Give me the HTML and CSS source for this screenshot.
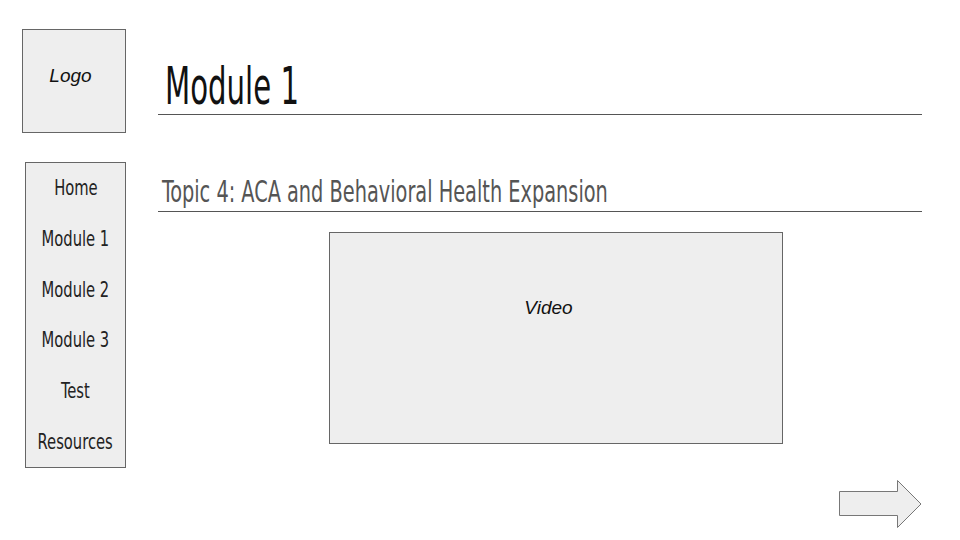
FILE: index.html
```html
<!DOCTYPE html>
<html>
<head>
<meta charset="utf-8">
<link rel="stylesheet" href="styles.css">
</head>
<body>
<div class="page">
  <div class="logo"><span>Logo</span></div>
  <header class="header"><h1 class="title"><span class="sq">Module 1</span></h1></header>
  <nav class="nav">
    <a class="nav-item"><span class="sq">Home</span></a>
    <a class="nav-item"><span class="sq">Module 1</span></a>
    <a class="nav-item"><span class="sq">Module 2</span></a>
    <a class="nav-item"><span class="sq">Module 3</span></a>
    <a class="nav-item"><span class="sq">Test</span></a>
    <a class="nav-item"><span class="sq">Resources</span></a>
  </nav>
  <main class="main">
    <h2 class="topic"><span class="sq">Topic 4: ACA and Behavioral Health Expansion</span></h2>
    <div class="video"><span>Video</span></div>
  </main>
  <div class="footer">
    <svg class="next" width="84" height="49" viewBox="0 0 84 49">
      <polygon points="1.5,11.5 59.5,11.5 59.5,0.5 83,24 59.5,47.5 59.5,35.5 1.5,35.5" fill="#eeeeee" stroke="#777" stroke-width="1"/>
    </svg>
  </div>
</div>
</body>
</html>
```

FILE: styles.css
```css
html, body {
  margin: 0;
  padding: 0;
  background: #ffffff;
}

.page {
  display: grid;
  grid-template-columns: 104px 764px;
  column-gap: 32px;
  padding: 29px 0 0 22px;
  font-family: "Liberation Sans Narrow", "DejaVu Sans Condensed", "Liberation Sans", sans-serif;
}

.sq {
  display: inline-block;
  transform: scaleX(0.78);
  transform-origin: left center;
  white-space: nowrap;
}

.logo {
  box-sizing: border-box;
  width: 104px;
  height: 104px;
  border: 1px solid #666;
  background: #eeeeee;
  display: flex;
  align-items: center;
  justify-content: center;
  font-family: "Liberation Sans", Arial, sans-serif;
  font-style: italic;
  font-size: 19px;
  color: #111;
}

.logo span {
  margin: 0 7px 10px 0;
}

.header {
  box-sizing: border-box;
  height: 86px;
  border-bottom: 1px solid #555;
  display: flex;
  align-items: flex-end;
}

.title {
  margin: 0 0 0 7px;
  font-weight: normal;
  font-size: 52px;
  line-height: 1;
  color: #111;
  padding-bottom: 2px;
}

.title .sq {
  transform: scaleX(0.624);
}

.nav {
  box-sizing: border-box;
  margin: 29px 0 0 3px;
  width: 101px;
  height: 306px;
  border: 1px solid #666;
  background: #eeeeee;
  display: flex;
  flex-direction: column;
}

.nav-item {
  flex: 1;
  display: flex;
  align-items: center;
  justify-content: center;
  font-size: 21px;
  color: #222;
}

.nav-item .sq {
  transform-origin: center center;
}

.main {
  margin-top: 29px;
}

.topic {
  box-sizing: border-box;
  margin: 0;
  height: 50px;
  border-bottom: 1px solid #555;
  display: flex;
  align-items: flex-end;
  padding: 0 0 4px 4px;
  font-weight: normal;
  font-size: 31px;
  line-height: 1;
  color: #555;
}

.topic .sq {
  transform: scaleX(0.693);
}

.video {
  box-sizing: border-box;
  margin: 20px 0 0 171px;
  width: 454px;
  height: 212px;
  border: 1px solid #666;
  background: #eeeeee;
  display: flex;
  justify-content: center;
  padding: 64px 15px 0 0;
  font-family: "Liberation Sans", Arial, sans-serif;
  font-style: italic;
  font-size: 19px;
  line-height: 1.15;
  color: #111;
}

.footer {
  grid-column: 2;
  display: flex;
  justify-content: flex-end;
  margin-top: 12px;
}

.next {
  display: block;
}
```
